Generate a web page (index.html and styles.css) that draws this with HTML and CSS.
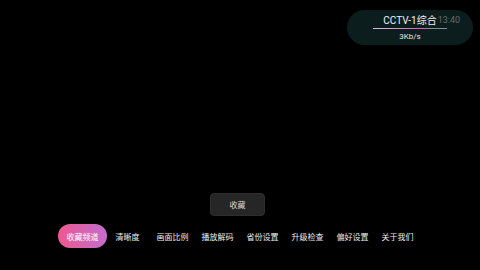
FILE: index.html
```html
<!DOCTYPE html>
<html lang="zh">
<head>
<meta charset="utf-8">
<link rel="stylesheet" href="styles.css">
</head>
<body>
<div class="screen">
  <div class="top">
    <div class="panel">
      <div class="title">CCTV-1综合<span class="time">13:40</span></div>
      <div class="bar"><div class="bar-fill"></div></div>
      <div class="speed">3Kb/s</div>
    </div>
  </div>
  <div class="spacer"></div>
  <div class="action">
    <div class="btn">收藏</div>
  </div>
  <div class="nav">
    <div class="pill">收藏频道</div>
    <div class="item first">清晰度</div>
    <div class="item">画面比例</div>
    <div class="item">播放解码</div>
    <div class="item">省份设置</div>
    <div class="item">升级检查</div>
    <div class="item">偏好设置</div>
    <div class="item">关于我们</div>
  </div>
</div>
</body>
</html>
```
FILE: styles.css
```css
html, body {
  margin: 0;
  padding: 0;
  background: #000;
}
.screen {
  width: 480px;
  height: 270px;
  display: flex;
  flex-direction: column;
  font-family: Roboto, "Noto Sans CJK SC", sans-serif;
  color: #fff;
}
.top {
  display: flex;
  justify-content: flex-end;
  padding: 10px 7px 0 0;
}
.panel {
  width: 126px;
  height: 35px;
  box-sizing: border-box;
  border-radius: 18px;
  background: #0c1d1d;
  display: flex;
  flex-direction: column;
  align-items: center;
  padding-top: 4px;
}
.title {
  position: relative;
  font-size: 10px;
  line-height: 13px;
  color: #f2f2f2;
}
.time {
  position: absolute;
  left: 100%;
  top: 0;
  margin-left: 1px;
  color: #6a6a6a;
  font-size: 9px;
}
.bar {
  width: 74px;
  height: 1px;
  margin-top: 1px;
  background: #8a8a8a;
}
.bar-fill {
  width: 54px;
  height: 1px;
  background: linear-gradient(to right, #cfc4cf, #e050b8);
}
.speed {
  margin-top: 3px;
  font-size: 8px;
  line-height: 10px;
  color: #e6e6e6;
}
.spacer {
  flex: 1;
}
.action {
  display: flex;
  justify-content: center;
  padding-right: 5px;
}
.btn {
  width: 55px;
  height: 23px;
  box-sizing: border-box;
  border-radius: 4px;
  background: #262626;
  border: 1px solid #2e2e2e;
  display: flex;
  align-items: center;
  justify-content: center;
  font-size: 8px;
  color: #d6d6d6;
  font-family: "Noto Sans CJK SC", sans-serif;
}
.nav {
  display: flex;
  align-items: center;
  padding-left: 58px;
  margin-top: 8px;
  margin-bottom: 22px;
  height: 24px;
  font-family: "Noto Sans CJK SC", sans-serif;
}
.pill {
  width: 49px;
  height: 24px;
  border-radius: 12px;
  background: linear-gradient(to right, #ec5a8e, #c56ccf);
  display: flex;
  align-items: center;
  justify-content: center;
  font-size: 8px;
  color: #fff;
}
.item {
  width: 45px;
  text-align: center;
  font-size: 8px;
  color: #ececec;
}
.item.first {
  margin-left: -2px;
}
```
